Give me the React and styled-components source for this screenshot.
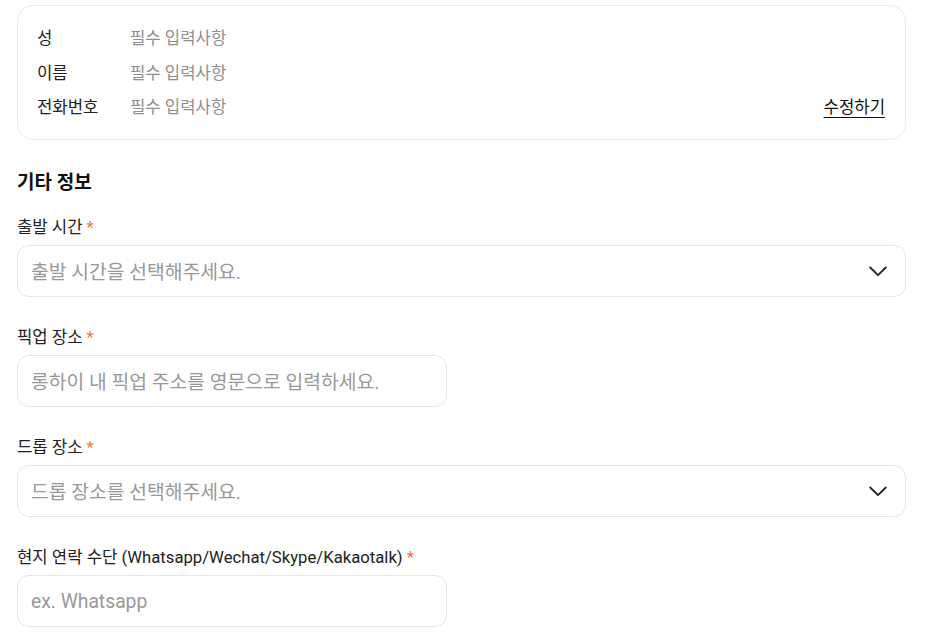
import React from 'react';
import styled, { createGlobalStyle } from 'styled-components';

const GlobalStyle = createGlobalStyle`
  * { box-sizing: border-box; }
  body {
    margin: 0;
    background: #fff;
    overflow: hidden;
    font-family: Roboto, "Noto Sans CJK KR", sans-serif;
    color: #222;
  }
`;

const Page = styled.div`
  padding: 5px 26px 0 17px;
`;

const InfoCard = styled.div`
  border: 1px solid #ebebeb;
  border-radius: 16px;
  padding: 19px 19px 21px 19px;
  display: flex;
  flex-direction: column;
  gap: 10.5px;
`;

const InfoRow = styled.div`
  display: flex;
  align-items: center;
  height: 24px;
  font-size: 16.7px;
`;

const InfoLabel = styled.span`
  width: 93px;
  color: #222;
`;

const InfoValue = styled.span`
  color: #8f8f8f;
  flex: 1;
`;

const EditLink = styled.a`
  color: #111;
  text-decoration: underline;
  text-underline-offset: 4px;
  font-size: 16.7px;
  margin-right: 1px;
  cursor: pointer;
`;

const SectionTitle = styled.h3`
  margin: 31px 0 21px;
  font-size: 19px;
  line-height: 24px;
  font-weight: 700;
  color: #111;
`;

const Field = styled.div`
  display: flex;
  flex-direction: column;
  gap: 6px;
  margin-bottom: 29px;
`;

const Label = styled.label`
  font-size: 16.7px;
  line-height: 23px;
  color: #222;
`;

const Required = styled.span`
  color: #ec7a3a;
  margin-left: 4px;
`;

const Box = styled.div`
  height: 52px;
  width: ${({ $half }) => ($half ? '430px' : '100%')};
  border: 1px solid #e5e5e5;
  border-radius: 12px;
  display: flex;
  align-items: center;
  justify-content: space-between;
  padding: 0 18px 0 13px;
  font-size: 19.3px;
  color: #999;
  cursor: ${({ $select }) => ($select ? 'pointer' : 'text')};
`;

const Chevron = () => (
  <svg width="18" height="11" viewBox="0 0 18 11" fill="none">
    <path d="M1.2 1.5 L9 9.2 L16.8 1.5" stroke="#222" strokeWidth="1.8" strokeLinecap="round" strokeLinejoin="round" />
  </svg>
);

const fields = [
  { label: '출발 시간', placeholder: '출발 시간을 선택해주세요.', select: true },
  { label: '픽업 장소', placeholder: '롱하이 내 픽업 주소를 영문으로 입력하세요.', half: true },
  { label: '드롭 장소', placeholder: '드롭 장소를 선택해주세요.', select: true },
  { label: '현지 연락 수단 (Whatsapp/Wechat/Skype/Kakaotalk)', placeholder: 'ex. Whatsapp', half: true },
];

export default function App() {
  return (
    <>
      <GlobalStyle />
      <Page>
        <InfoCard>
          <InfoRow>
            <InfoLabel>성</InfoLabel>
            <InfoValue>필수 입력사항</InfoValue>
          </InfoRow>
          <InfoRow>
            <InfoLabel>이름</InfoLabel>
            <InfoValue>필수 입력사항</InfoValue>
          </InfoRow>
          <InfoRow>
            <InfoLabel>전화번호</InfoLabel>
            <InfoValue>필수 입력사항</InfoValue>
            <EditLink>수정하기</EditLink>
          </InfoRow>
        </InfoCard>

        <SectionTitle>기타 정보</SectionTitle>

        {fields.map((f) => (
          <Field key={f.label}>
            <Label>
              {f.label}
              <Required>*</Required>
            </Label>
            <Box $half={f.half} $select={f.select}>
              <span>{f.placeholder}</span>
              {f.select && <Chevron />}
            </Box>
          </Field>
        ))}
      </Page>
    </>
  );
}
